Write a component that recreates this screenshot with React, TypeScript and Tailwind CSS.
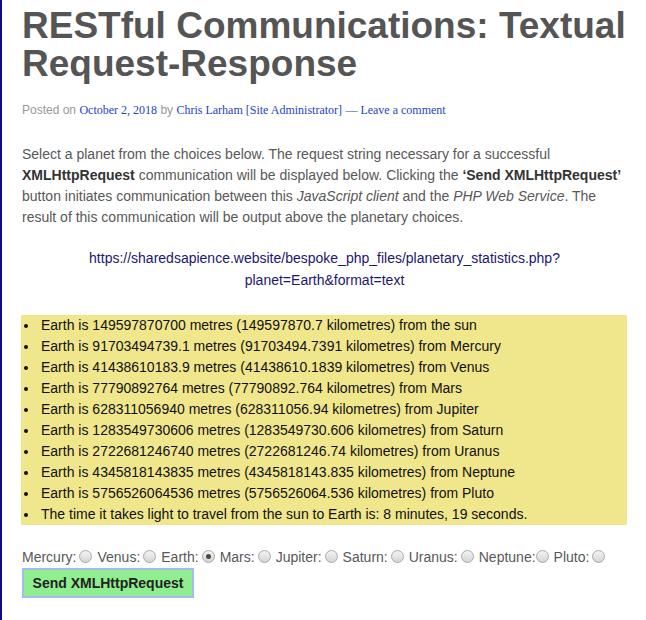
import { useState } from 'react'

const PLANETS = ['Mercury', 'Venus', 'Earth', 'Mars', 'Jupiter', 'Saturn', 'Uranus', 'Neptune', 'Pluto']

const RESULTS = [
  'Earth is 149597870700 metres (149597870.7 kilometres) from the sun',
  'Earth is 91703494739.1 metres (91703494.7391 kilometres) from Mercury',
  'Earth is 41438610183.9 metres (41438610.1839 kilometres) from Venus',
  'Earth is 77790892764 metres (77790892.764 kilometres) from Mars',
  'Earth is 628311056940 metres (628311056.94 kilometres) from Jupiter',
  'Earth is 1283549730606 metres (1283549730.606 kilometres) from Saturn',
  'Earth is 2722681246740 metres (2722681246.74 kilometres) from Uranus',
  'Earth is 4345818143835 metres (4345818143.835 kilometres) from Neptune',
  'Earth is 5756526064536 metres (5756526064.536 kilometres) from Pluto',
  'The time it takes light to travel from the sun to Earth is: 8 minutes, 19 seconds.',
]

function Radio({ checked, onClick, tight }: { checked: boolean; onClick: () => void; tight?: boolean }) {
  return (
    <span
      onClick={onClick}
      className={`${tight ? 'ml-0' : 'ml-[3px]'} mr-[5px] mb-[2px] flex h-[13px] w-[13px] shrink-0 items-center justify-center rounded-full border border-[#a9a9a9] bg-gradient-to-b from-[#f4f4f4] to-[#d4d4d4]`}
    >
      {checked && <span className="h-[5px] w-[5px] rounded-full bg-[#4a4a4a]" />}
    </span>
  )
}

export default function App() {
  const [planet, setPlanet] = useState('Earth')

  return (
    <div className="min-h-[620px] border-l-2 border-[#0b0b8a] bg-white pl-5 pt-[7px] font-['Liberation_Sans',Arial,sans-serif]">
      <div className="w-[605px]">
        <h1 className="text-[37px] font-bold leading-[37.5px] text-[#555555]">
          RESTful Communications: Textual Request-Response
        </h1>

        <div className="mt-[19px] text-[12px] leading-[18px] text-[#999999]">
          Posted on{' '}
          <a className="font-['Liberation_Serif','Times_New_Roman',serif] text-[#2443c9]">October 2, 2018</a> by{' '}
          <a className="font-['Liberation_Serif','Times_New_Roman',serif] text-[#2443c9]">
            Chris Larham [Site Administrator]
          </a>{' '}
          <span className="font-['Liberation_Serif','Times_New_Roman',serif] text-[#2443c9]">— Leave a comment</span>
        </div>

        <p className="mt-[25px] text-[14px] leading-[21px] text-[#585858]">
          Select a planet from the choices below. The request string necessary for a successful{' '}
          <b className="text-[#333333]">XMLHttpRequest</b> communication will be displayed below. Clicking the{' '}
          <b className="text-[#333333]">‘Send XMLHttpRequest’</b> button initiates communication between this{' '}
          <i>JavaScript client</i> and the <i>PHP Web Service</i>. The result of this communication will be output
          above the planetary choices.
        </p>

        <p className="mt-[20px] text-center text-[14px] leading-[21.5px] text-[#1c1670]">
          https://sharedsapience.website/bespoke_php_files/planetary_statistics.php?
          <br />
          planet={planet}&amp;format=text
        </p>

        {/* result list; bullets drawn by hand so they sit at the box edge */}
        <ul className="-ml-px mt-[24px] bg-[#f0e68c] text-[14px] leading-[21px] text-[#111111]">
          {RESULTS.map((line) => (
            <li key={line} className="flex items-center">
              <span className="flex w-[20px] shrink-0 pl-[3px]">
                <span className="h-[4px] w-[4px] rounded-full bg-[#111111]" />
              </span>
              <span>{line}</span>
            </li>
          ))}
        </ul>

        <div className="mt-[22px] flex h-[21px] items-center text-[14px] text-[#585858]">
          {PLANETS.map((name) => (
            <span key={name} className="flex items-center">
              <span>{name}:</span>
              <Radio checked={planet === name} onClick={() => setPlanet(name)} tight={name === 'Neptune'} />
            </span>
          ))}
        </div>

        <button className="flex h-[30px] w-[172px] items-center justify-center border-2 border-[#a3bbf0] bg-[#90ee90] text-[14px] font-bold text-[#222222]">
          Send XMLHttpRequest
        </button>
      </div>
    </div>
  )
}
